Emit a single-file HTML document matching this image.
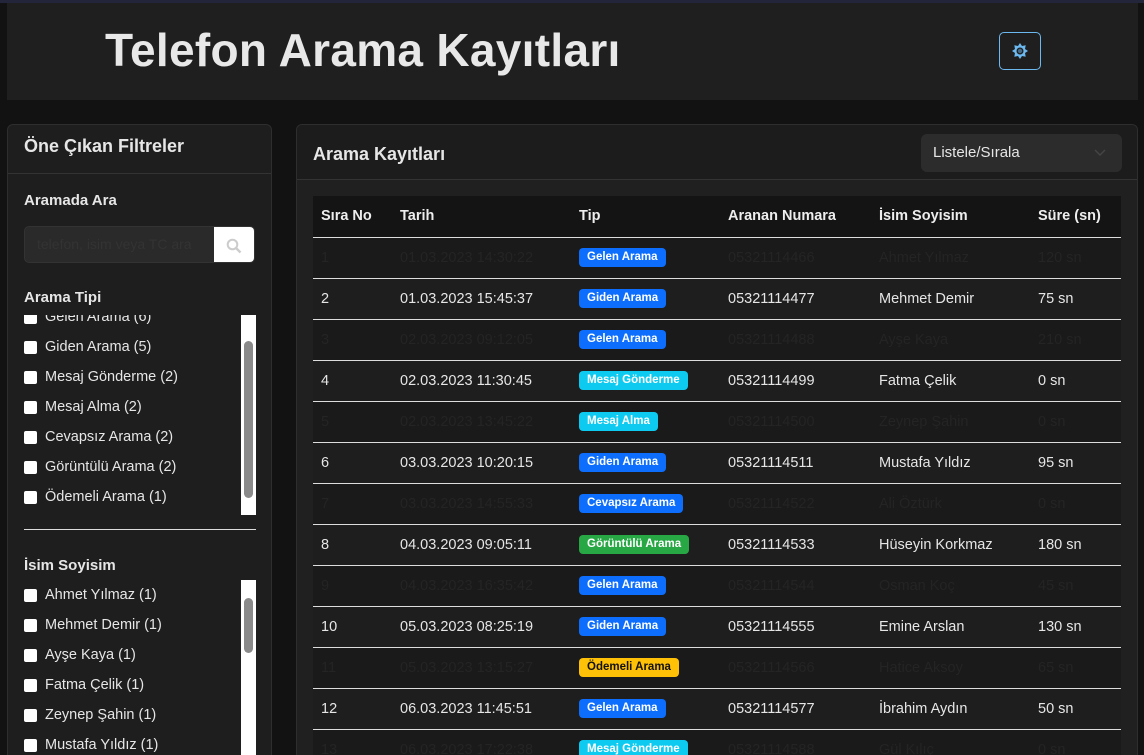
<!DOCTYPE html>
<html style="width:1144px;height:755px;overflow:hidden"><head><meta charset="utf-8"><style>
*{box-sizing:border-box;margin:0;padding:0}
body{width:1144px;height:755px;overflow:hidden;background:#121212;font-family:"Liberation Sans",sans-serif;color:#e6e6e6;position:relative}
.top{position:absolute;left:0;top:0;width:1144px;height:3px;background:#23263a}
.hdr{position:absolute;left:7px;top:3px;width:1131px;height:97px;background:#1f1f1f}
.hdr h1{position:absolute;left:98px;top:20px;font-size:46px;font-weight:bold;color:#e8e8e8;letter-spacing:0.3px}
.gear{position:absolute;left:992px;top:29px;width:42px;height:38px;border:1px solid #6cb8f0;border-radius:5px;display:flex;align-items:center;justify-content:center}
.side{position:absolute;left:7px;top:124px;width:265px;height:631px;background:#1e1e1e;border:1px solid #2e2e2e;border-bottom:none;border-radius:6px 6px 0 0;overflow:hidden}
.side .sh{height:49px;border-bottom:1px solid #333;padding:11px 16px;font-size:18px;font-weight:bold}
.lbl{position:absolute;left:16px;font-size:15px;font-weight:bold}
.inp{position:absolute;left:16px;top:101px;width:231px;height:37px;background:#2a2a2a;border-radius:5px;overflow:hidden;border:1px solid #333}
.inp span{position:absolute;left:12px;top:9px;font-size:14px;color:#333;white-space:nowrap}
.inp .btn{position:absolute;right:0;top:0;width:40px;height:37px;background:#fff;display:flex;align-items:center;justify-content:center}
.list{position:absolute;left:16px;width:232px;overflow:hidden}
.it{height:30px;display:flex;align-items:center;font-size:14.5px}
.cb{width:13px;height:13px;background:#fff;border-radius:2px;margin-right:8px}
.sb{position:absolute;right:0;top:0;width:15px;background:#fff}
.thumb{position:absolute;left:3px;width:9px;background:#8a8a8a;border-radius:5px}
.main{position:absolute;left:296px;top:124px;width:842px;height:631px;background:#202020;border:1px solid #2e2e2e;border-bottom:none;border-radius:6px 6px 0 0;overflow:hidden}
.mh{height:55px;background:#1c1c1c;border-bottom:1px solid #333;position:relative}
.mh .t{position:absolute;left:16px;top:19px;font-size:18px;font-weight:bold}
.sel{position:absolute;left:624px;top:9px;width:201px;height:38px;background:#2c2c2c;border-radius:6px;font-size:15px;padding:10px 12px}
table{position:absolute;left:16px;top:71px;width:808px;border-collapse:collapse;font-size:14.5px}
td,th{text-align:left;height:41px;padding:0 0 0 8px;border-bottom:1px solid #ddd;white-space:nowrap}
th{background:#141414;font-weight:bold;color:#eee}
tr.d td{background:#1a1a1a;color:#242424}
tr.l td{background:#1e1e1e;color:#e6e6e6}
.b{display:inline-block;font-size:11.5px;font-weight:bold;color:#fff;padding:3px 8px;border-radius:4px;line-height:13px;vertical-align:middle}
.bl{background:#0d6efd}.cy{background:#0dcaf0}.gr{background:#28a745}.ye{background:#ffc107;color:#111}
</style></head><body>
<div class="top"></div>
<div class="hdr"><h1>Telefon Arama Kayıtları</h1>
<div class="gear"><svg width="18" height="18" viewBox="0 0 18 18"><polygon points="9,1 11,4 14.7,3.3 14,7 17,9 14,11 14.7,14.7 11,14 9,17 7,14 3.3,14.7 4,11 1,9 4,7 3.3,3.3 7,4" fill="#6cb8f0"/><circle cx="9" cy="9" r="3.5" fill="#1f1f1f"/><circle cx="9" cy="9" r="2.2" fill="#6cb8f0" opacity=".5"/></svg></div></div>

<div class="side"><div class="sh">Öne Çıkan Filtreler</div>
<div class="lbl" style="top:67px">Aramada Ara</div>
<div class="inp"><span>telefon, isim veya TC ara</span><div class="btn"><svg width="16" height="16" viewBox="0 0 16 16"><circle cx="6.5" cy="6.5" r="4.8" fill="none" stroke="#ccc" stroke-width="2"/><line x1="10" y1="10" x2="14.5" y2="14.5" stroke="#ccc" stroke-width="2.4"/></svg></div></div>
<div class="lbl" style="top:164px">Arama Tipi</div>
<div class="list" style="top:190px;height:200px"><div style="margin-top:-13px">
<div class="it"><div class="cb"></div>Gelen Arama (6)</div><div class="it"><div class="cb"></div>Giden Arama (5)</div><div class="it"><div class="cb"></div>Mesaj Gönderme (2)</div><div class="it"><div class="cb"></div>Mesaj Alma (2)</div><div class="it"><div class="cb"></div>Cevapsız Arama (2)</div><div class="it"><div class="cb"></div>Görüntülü Arama (2)</div><div class="it"><div class="cb"></div>Ödemeli Arama (1)</div></div>
<div class="sb" style="height:200px"><div class="thumb" style="top:26px;height:157px"></div></div></div>
<div style="position:absolute;left:16px;top:404px;width:232px;height:1px;background:#ddd"></div>
<div class="lbl" style="top:432px">İsim Soyisim</div>
<div class="list" style="top:455px;height:200px">
<div class="it"><div class="cb"></div>Ahmet Yılmaz (1)</div><div class="it"><div class="cb"></div>Mehmet Demir (1)</div><div class="it"><div class="cb"></div>Ayşe Kaya (1)</div><div class="it"><div class="cb"></div>Fatma Çelik (1)</div><div class="it"><div class="cb"></div>Zeynep Şahin (1)</div><div class="it"><div class="cb"></div>Mustafa Yıldız (1)</div>
<div class="sb" style="height:200px"><div class="thumb" style="top:18px;height:55px"></div></div></div>
</div>

<div class="main"><div class="mh"><div class="t">Arama Kayıtları</div><div class="sel">Listele/Sırala<svg style="position:absolute;right:16px;top:15px" width="12" height="8" viewBox="0 0 12 8"><polyline points="1,1 6,6 11,1" fill="none" stroke="#444" stroke-width="1.5"/></svg></div></div>
<table>
<tr><th style="width:79px">Sıra No</th><th style="width:179px">Tarih</th><th style="width:149px">Tip</th><th style="width:151px">Aranan Numara</th><th style="width:159px">İsim Soyisim</th><th>Süre (sn)</th></tr>
<tr class="d"><td>1</td><td>01.03.2023 14:30:22</td><td><span class="b bl">Gelen Arama</span></td><td>05321114466</td><td>Ahmet Yılmaz</td><td>120 sn</td></tr>
<tr class="l"><td>2</td><td>01.03.2023 15:45:37</td><td><span class="b bl">Giden Arama</span></td><td>05321114477</td><td>Mehmet Demir</td><td>75 sn</td></tr>
<tr class="d"><td>3</td><td>02.03.2023 09:12:05</td><td><span class="b bl">Gelen Arama</span></td><td>05321114488</td><td>Ayşe Kaya</td><td>210 sn</td></tr>
<tr class="l"><td>4</td><td>02.03.2023 11:30:45</td><td><span class="b cy">Mesaj Gönderme</span></td><td>05321114499</td><td>Fatma Çelik</td><td>0 sn</td></tr>
<tr class="d"><td>5</td><td>02.03.2023 13:45:22</td><td><span class="b cy">Mesaj Alma</span></td><td>05321114500</td><td>Zeynep Şahin</td><td>0 sn</td></tr>
<tr class="l"><td>6</td><td>03.03.2023 10:20:15</td><td><span class="b bl">Giden Arama</span></td><td>05321114511</td><td>Mustafa Yıldız</td><td>95 sn</td></tr>
<tr class="d"><td>7</td><td>03.03.2023 14:55:33</td><td><span class="b bl">Cevapsız Arama</span></td><td>05321114522</td><td>Ali Öztürk</td><td>0 sn</td></tr>
<tr class="l"><td>8</td><td>04.03.2023 09:05:11</td><td><span class="b gr">Görüntülü Arama</span></td><td>05321114533</td><td>Hüseyin Korkmaz</td><td>180 sn</td></tr>
<tr class="d"><td>9</td><td>04.03.2023 16:35:42</td><td><span class="b bl">Gelen Arama</span></td><td>05321114544</td><td>Osman Koç</td><td>45 sn</td></tr>
<tr class="l"><td>10</td><td>05.03.2023 08:25:19</td><td><span class="b bl">Giden Arama</span></td><td>05321114555</td><td>Emine Arslan</td><td>130 sn</td></tr>
<tr class="d"><td>11</td><td>05.03.2023 13:15:27</td><td><span class="b ye">Ödemeli Arama</span></td><td>05321114566</td><td>Hatice Aksoy</td><td>65 sn</td></tr>
<tr class="l"><td>12</td><td>06.03.2023 11:45:51</td><td><span class="b bl">Gelen Arama</span></td><td>05321114577</td><td>İbrahim Aydın</td><td>50 sn</td></tr>
<tr class="d"><td>13</td><td>06.03.2023 17:22:38</td><td><span class="b cy">Mesaj Gönderme</span></td><td>05321114588</td><td>Gül Kılıç</td><td>0 sn</td></tr>
</table></div>
</body></html>
